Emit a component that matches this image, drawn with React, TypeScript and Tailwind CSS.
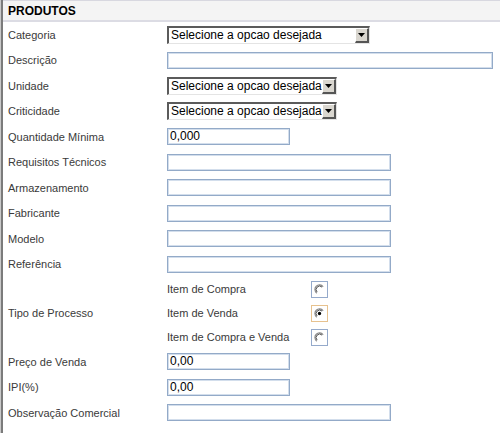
import React from 'react';

const font = { fontFamily: '"Liberation Sans", Arial, sans-serif' };

function Select({ width }: { width: string }) {
  return (
    <div className={`${width} h-[18px] flex items-stretch bg-white border-t-2 border-l-2 border-t-[#5b5b5b] border-l-[#5b5b5b] border-r border-b border-r-[#e4e4e4] border-b-[#e4e4e4]`}>
      <span className="flex-1 pl-[2px] text-[12px] leading-[15px] text-black whitespace-nowrap overflow-hidden">Selecione a opcao desejada</span>
      <span className="w-[14px] flex items-center justify-center bg-[#d9d6cf] border-t border-l border-t-white border-l-white border-r-2 border-b-2 border-r-[#555] border-b-[#555]">
        <svg width="7" height="4" viewBox="0 0 7 4"><path d="M0 0h7L3.5 4z" fill="#000" /></svg>
      </span>
    </div>
  );
}

function Input({ width, value = '' }: { width: string; value?: string }) {
  return (
    <div className={`${width} h-[17px] bg-white border border-[#93aac8] shadow-[inset_0_0_0_1px_#d3deec] pl-[2px] text-[12px] leading-[15px] text-black`}>
      {value}
    </div>
  );
}

function Radio({ checked = false }: { checked?: boolean }) {
  return (
    <div className={`w-[17px] h-[17px] flex items-center justify-center bg-white border ${checked ? 'border-[#e7c28f]' : 'border-[#95aacb]'}`}>
      <svg width="11" height="11" viewBox="0 0 12 12">
        <circle cx="6" cy="6" r="5" fill="#fff" />
        <path d="M10 3A5 5 0 1 0 3 10" fill="none" stroke="#8a8a8a" strokeWidth="1.3" />
        <path d="M8.8 3.4A3.7 3.7 0 1 0 3.4 8.8" fill="none" stroke="#404040" strokeWidth="1" />
        {checked && <circle cx="6" cy="6" r="1.8" fill="#000" />}
      </svg>
    </div>
  );
}

function Row({ label, children }: { label: string; children: React.ReactNode }) {
  return (
    <div className="h-[25.5px] flex items-center">
      <div className="w-[164px] pl-[5px] text-[11px] text-[#3a3a3a]">{label}</div>
      {children}
    </div>
  );
}

export default function App() {
  return (
    <div className="w-[500px] h-[433px] bg-white border-l border-[#c9c9c9]" style={font}>
      <div className="h-full border-l-2 border-[#7b7b7b]">
        <div className="h-[22px] flex items-center bg-[#f4f4f4] border-t border-b-2 border-t-[#d8d8e0] border-b-[#dcdce4] pl-[5px] text-[12px] font-bold text-black">
          PRODUTOS
        </div>
        <Row label="Categoria"><Select width="w-[203px]" /></Row>
        <Row label="Descrição"><Input width="w-[326px]" /></Row>
        <Row label="Unidade"><Select width="w-[170px]" /></Row>
        <Row label="Criticidade"><Select width="w-[170px]" /></Row>
        <Row label="Quantidade Mínima"><Input width="w-[123px]" value="0,000" /></Row>
        <Row label="Requisitos Técnicos"><Input width="w-[224px]" /></Row>
        <Row label="Armazenamento"><Input width="w-[224px]" /></Row>
        <Row label="Fabricante"><Input width="w-[224px]" /></Row>
        <Row label="Modelo"><Input width="w-[224px]" /></Row>
        <Row label="Referência"><Input width="w-[224px]" /></Row>
        <div className="flex items-center">
          <div className="w-[164px] pl-[5px] text-[11px] text-[#3a3a3a]">Tipo de Processo</div>
          <div className="flex flex-col">
            {[
              ['Item de Compra', false],
              ['Item de Venda', true],
              ['Item de Compra e Venda', false],
            ].map(([t, c]) => (
              <div key={t as string} className="h-[24px] flex items-center">
                <span className="w-[144px] text-[11px] text-[#3a3a3a]">{t as string}</span>
                <Radio checked={c as boolean} />
              </div>
            ))}
          </div>
        </div>
        <Row label="Preço de Venda"><Input width="w-[123px]" value="0,00" /></Row>
        <Row label="IPI(%)"><Input width="w-[123px]" value="0,00" /></Row>
        <Row label="Observação Comercial"><Input width="w-[224px]" /></Row>
      </div>
    </div>
  );
}
